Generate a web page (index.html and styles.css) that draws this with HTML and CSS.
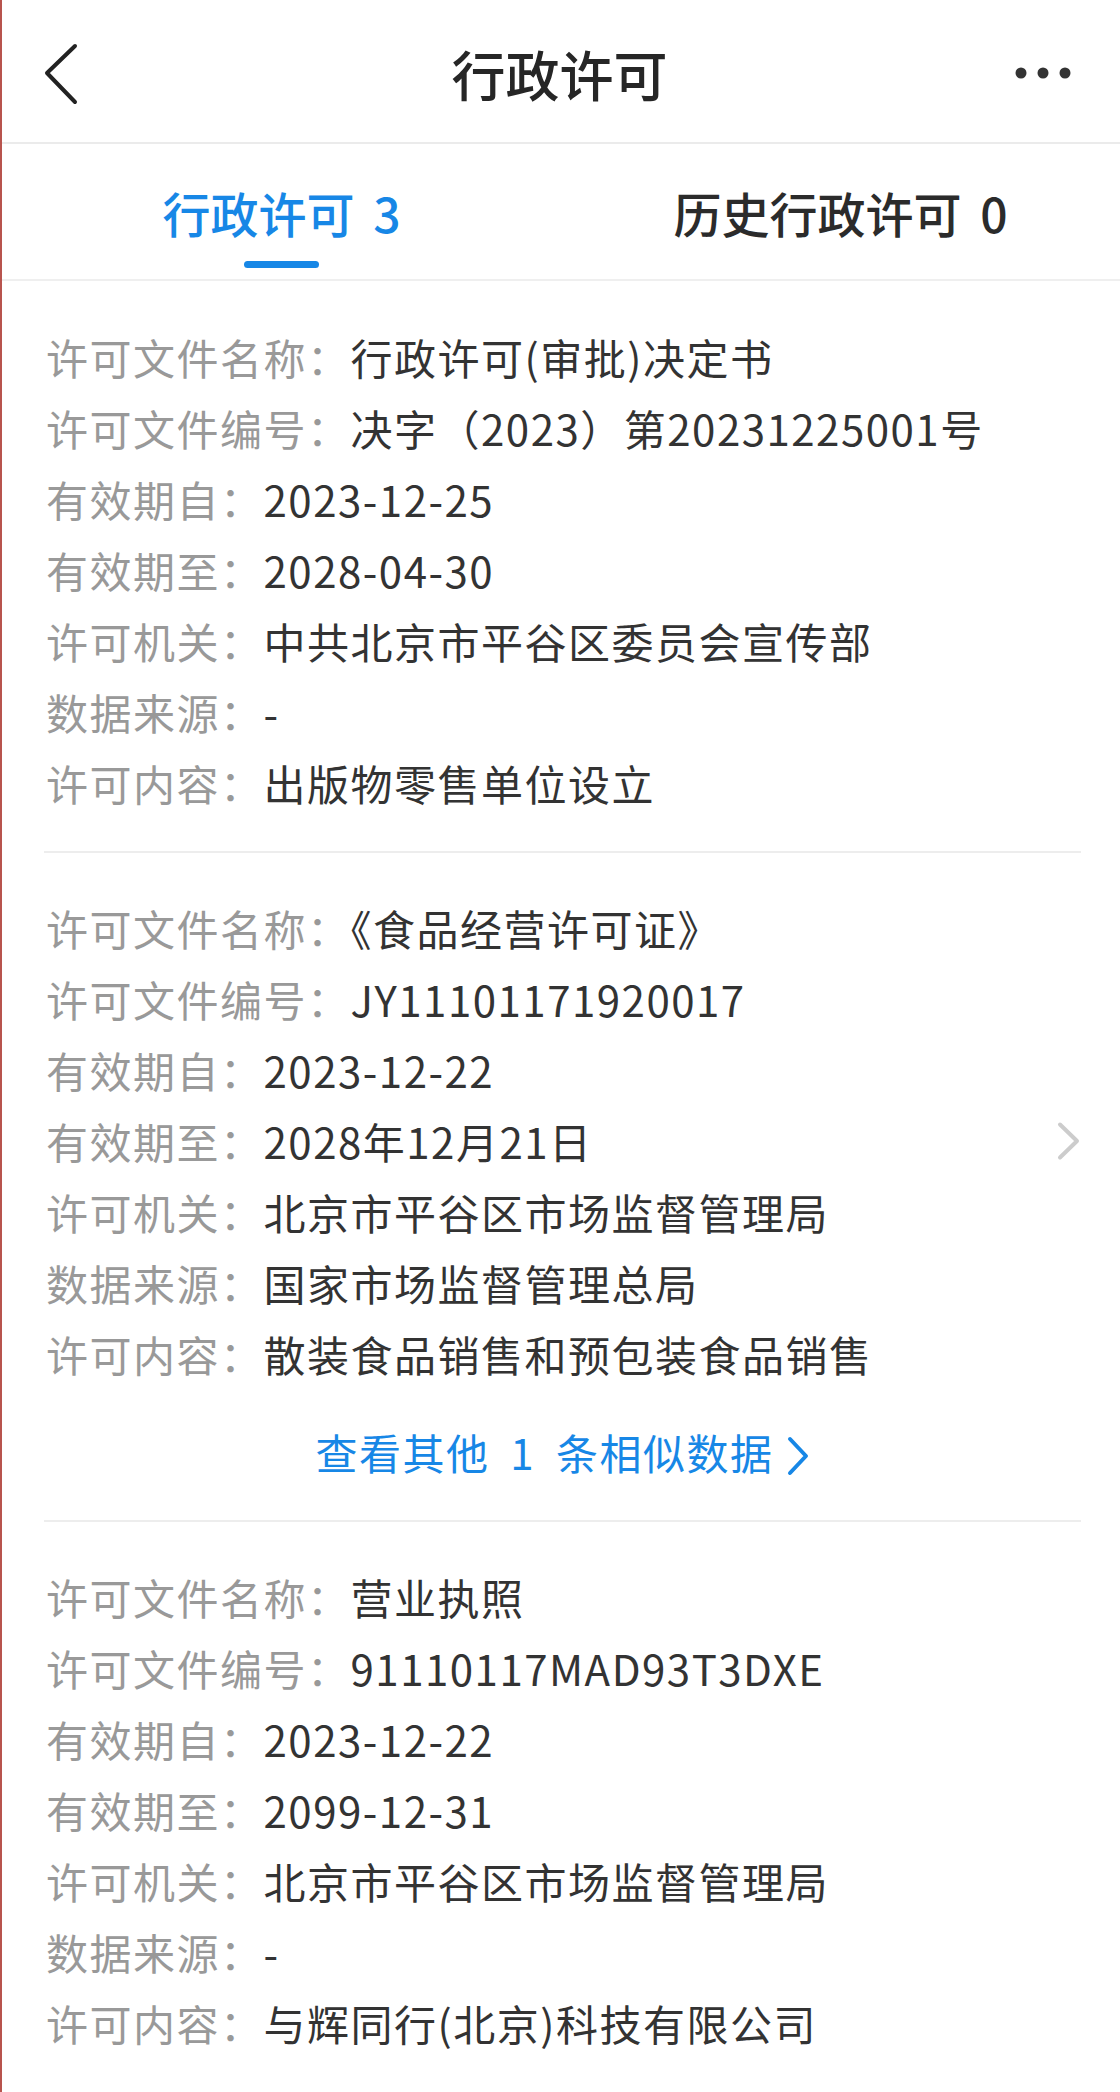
FILE: index.html
```html
<!DOCTYPE html>
<html lang="zh-CN">
<head>
<meta charset="utf-8">
<title>行政许可</title>
<link rel="stylesheet" href="styles.css">
</head>
<body>
<header class="topbar">
  <svg class="back" width="40" height="64" viewBox="0 0 40 64"><polyline points="33,4 5,31 33,60" fill="none" stroke="#222" stroke-width="4" stroke-linecap="round" stroke-linejoin="round"/></svg>
  <h1 class="title">行政许可</h1>
  <svg class="more" width="62" height="14" viewBox="0 0 62 14"><circle cx="6" cy="7" r="5.5" fill="#333"/><circle cx="28" cy="7" r="5.5" fill="#333"/><circle cx="50" cy="7" r="5.5" fill="#333"/></svg>
</header>
<nav class="tabs">
  <div class="tab active"><span class="tab-text">行政许可 3</span><span class="indicator"></span></div>
  <div class="tab"><span class="tab-text">历史行政许可 0</span><span class="indicator"></span></div>
</nav>
<main class="list">
  <section class="item">
    <div class="rows">
      <div class="row"><span class="label">许可文件名称：</span><span class="value">行政许可(审批)决定书</span></div>
      <div class="row"><span class="label">许可文件编号：</span><span class="value">决字（2023）第20231225001号</span></div>
      <div class="row"><span class="label">有效期自：</span><span class="value">2023-12-25</span></div>
      <div class="row"><span class="label">有效期至：</span><span class="value">2028-04-30</span></div>
      <div class="row"><span class="label">许可机关：</span><span class="value">中共北京市平谷区委员会宣传部</span></div>
      <div class="row"><span class="label">数据来源：</span><span class="value">-</span></div>
      <div class="row"><span class="label">许可内容：</span><span class="value">出版物零售单位设立</span></div>
    </div>
  </section>
  <section class="item">
    <div class="item-main">
      <div class="rows">
        <div class="row"><span class="label">许可文件名称：</span><span class="value">《食品经营许可证》</span></div>
        <div class="row"><span class="label">许可文件编号：</span><span class="value">JY11101171920017</span></div>
        <div class="row"><span class="label">有效期自：</span><span class="value">2023-12-22</span></div>
        <div class="row"><span class="label">有效期至：</span><span class="value">2028年12月21日</span></div>
        <div class="row"><span class="label">许可机关：</span><span class="value">北京市平谷区市场监督管理局</span></div>
        <div class="row"><span class="label">数据来源：</span><span class="value">国家市场监督管理总局</span></div>
        <div class="row"><span class="label">许可内容：</span><span class="value">散装食品销售和预包装食品销售</span></div>
      </div>
      <svg class="arrow" width="24" height="40" viewBox="0 0 24 40"><polyline points="3,3.5 20,20 3,36.5" fill="none" stroke="#cccccc" stroke-width="4" stroke-linecap="round" stroke-linejoin="round"/></svg>
    </div>
    <div class="more-link">查看其他 1 条相似数据<svg class="link-arrow" width="24" height="40" viewBox="0 0 24 40"><polyline points="4,3 20,20 4,37" fill="none" stroke="#1787e6" stroke-width="4" stroke-linecap="round" stroke-linejoin="round"/></svg></div>
  </section>
  <section class="item last">
    <div class="rows">
      <div class="row"><span class="label">许可文件名称：</span><span class="value">营业执照</span></div>
      <div class="row"><span class="label">许可文件编号：</span><span class="value">91110117MAD93T3DXE</span></div>
      <div class="row"><span class="label">有效期自：</span><span class="value">2023-12-22</span></div>
      <div class="row"><span class="label">有效期至：</span><span class="value">2099-12-31</span></div>
      <div class="row"><span class="label">许可机关：</span><span class="value">北京市平谷区市场监督管理局</span></div>
      <div class="row"><span class="label">数据来源：</span><span class="value">-</span></div>
      <div class="row"><span class="label">许可内容：</span><span class="value">与辉同行(北京)科技有限公司</span></div>
    </div>
  </section>
</main>
</body>
</html>
```
FILE: styles.css
```css
html, body {
  margin: 0;
  padding: 0;
  background: #ffffff;
}
body {
  width: 1118px;
  min-height: 2092px;
  border-left: 2px solid #b8544e;
  font-family: "Noto Sans CJK SC", "Noto Sans", sans-serif;
  color: #333333;
}
.topbar {
  display: grid;
  grid-template-columns: 1fr auto 1fr;
  align-items: center;
  padding: 0 43px 0 40px;
  border-bottom: 2px solid #ebebeb;
  box-sizing: border-box;
  height: 144px;
}
.back {
  justify-self: start;
  display: block;
  margin-top: 6px;
}
.title {
  margin: 0;
  font-size: 54px;
  font-weight: 500;
  line-height: 60px;
  color: #262626;
  margin-top: 6px;
}
.more {
  justify-self: end;
  display: block;
  margin-top: 4px;
}
.tabs {
  display: flex;
  height: 137px;
  border-bottom: 2px solid #efefef;
  box-sizing: border-box;
}
.tab {
  flex: 1;
  display: flex;
  flex-direction: column;
  align-items: center;
  padding-top: 44px;
  box-sizing: border-box;
}
.tab-text {
  font-size: 48px;
  line-height: 48px;
  font-weight: 500;
  word-spacing: 8px;
  color: #2b2b2b;
}
.tab.active .tab-text {
  color: #1787e6;
}
.indicator {
  display: block;
  width: 75px;
  height: 7px;
  margin-top: 25px;
  border-radius: 4px;
  background: transparent;
}
.tab.active .indicator {
  background: #1787e6;
}
.list {
  margin: 0 39px 0 42px;
}
.item {
  padding: 40px 0 33px 0;
  border-bottom: 2px solid #ededed;
}
.item + .item {
  padding-top: 39px;
}
.item.last {
  border-bottom: none;
}
.item-main {
  display: flex;
  align-items: center;
  justify-content: space-between;
}
.rows {
  display: flex;
  flex-direction: column;
}
.row {
  font-size: 42px;
  line-height: 71px;
  letter-spacing: 1.5px;
  white-space: nowrap;
  padding-left: 2px;
}
.label {
  color: #999999;
}
.value {
  color: #333333;
}
.arrow {
  display: block;
  flex: none;
}
.more-link {
  margin-top: 27px;
  text-align: center;
  font-size: 42px;
  line-height: 71px;
  letter-spacing: 1.5px;
  word-spacing: 10px;
  color: #1787e6;
  white-space: nowrap;
}
.link-arrow {
  display: inline-block;
  vertical-align: middle;
  margin-left: 12px;
  margin-top: -6px;
}
```
